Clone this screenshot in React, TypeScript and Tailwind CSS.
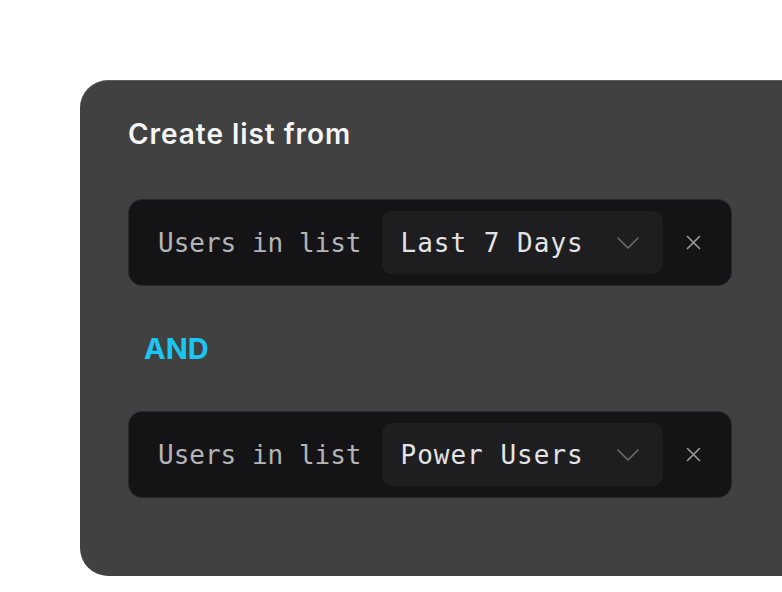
const mono = { fontFamily: '"DejaVu Sans Mono", "Liberation Mono", monospace' }

function Chevron() {
  return (
    <svg width="22" height="12" viewBox="0 0 22 12" fill="none" className="text-[#6e6e72]">
      <path d="M1 1l10 10 10-10" stroke="currentColor" strokeWidth="1.5" strokeLinecap="round" strokeLinejoin="round" />
    </svg>
  )
}

function Cross() {
  return (
    <svg width="15" height="15" viewBox="0 0 15 15" fill="none" className="text-[#9a9a9e]">
      <path d="M1.5 1.5l12 12M13.5 1.5l-12 12" stroke="currentColor" strokeWidth="1.6" strokeLinecap="round" />
    </svg>
  )
}

function ConditionRow({ value }: { value: string }) {
  return (
    <div className="flex h-[87px] w-[604px] items-center rounded-[14px] border border-[#29292b] bg-[#141416] pl-[29px]">
      <span className="text-[26px] leading-none text-[#b4b4b6]" style={mono}>
        Users in list
      </span>
      <div className="ml-[20px] flex h-[63px] w-[281px] items-center justify-between rounded-[10px] bg-[#1e1e20] pl-[19px] pr-[24px]">
        <span className="text-[26px] leading-none tracking-[1px] text-[#e4e4e6]" style={mono}>
          {value}
        </span>
        <Chevron />
      </div>
      <div className="flex flex-1 justify-center pr-[7px]">
        <Cross />
      </div>
    </div>
  )
}

export default function App() {
  return (
    <div className="h-[592px] w-[782px] overflow-hidden bg-white" style={{ fontFamily: 'Inter, "Noto Sans", sans-serif' }}>
      <div className="ml-[80px] mt-[80px] h-[496px] w-[760px] rounded-[28px] border-t border-[#5e5e5e] bg-[#414141] pl-[48px] pt-[36px]">
        <h2 className="text-[28px] font-semibold leading-[34px] tracking-[0.95px] text-[#f5f5f5]">Create list from</h2>
        <div className="mt-[48px]">
          <ConditionRow value="Last 7 Days" />
        </div>
        <div className="flex h-[125px] items-center pl-[16px]">
          <span className="text-[29px] font-bold leading-none text-[#1cc6f2]">AND</span>
        </div>
        <ConditionRow value="Power Users" />
      </div>
    </div>
  )
}
